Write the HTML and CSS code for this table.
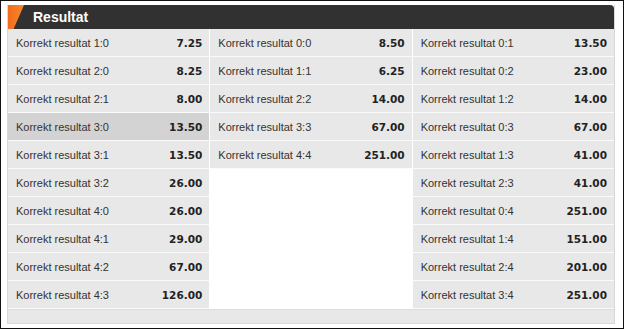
FILE: index.html
```html
<!DOCTYPE html>
<html>
<head>
<meta charset="utf-8">
<link rel="stylesheet" href="styles.css">
</head>
<body>
<div class="frame">
  <div class="panel">
    <div class="header">
      <span class="flag"></span>
      <span class="title">Resultat</span>
    </div>
    <div class="grid">
      <div class="col">
        <div class="cell"><span class="name">Korrekt resultat 1:0</span><span class="odds">7.25</span></div>
        <div class="cell"><span class="name">Korrekt resultat 2:0</span><span class="odds">8.25</span></div>
        <div class="cell"><span class="name">Korrekt resultat 2:1</span><span class="odds">8.00</span></div>
        <div class="cell active"><span class="name">Korrekt resultat 3:0</span><span class="odds">13.50</span></div>
        <div class="cell"><span class="name">Korrekt resultat 3:1</span><span class="odds">13.50</span></div>
        <div class="cell"><span class="name">Korrekt resultat 3:2</span><span class="odds">26.00</span></div>
        <div class="cell"><span class="name">Korrekt resultat 4:0</span><span class="odds">26.00</span></div>
        <div class="cell"><span class="name">Korrekt resultat 4:1</span><span class="odds">29.00</span></div>
        <div class="cell"><span class="name">Korrekt resultat 4:2</span><span class="odds">67.00</span></div>
        <div class="cell"><span class="name">Korrekt resultat 4:3</span><span class="odds">126.00</span></div>
      </div>
      <div class="col">
        <div class="cell"><span class="name">Korrekt resultat 0:0</span><span class="odds">8.50</span></div>
        <div class="cell"><span class="name">Korrekt resultat 1:1</span><span class="odds">6.25</span></div>
        <div class="cell"><span class="name">Korrekt resultat 2:2</span><span class="odds">14.00</span></div>
        <div class="cell"><span class="name">Korrekt resultat 3:3</span><span class="odds">67.00</span></div>
        <div class="cell"><span class="name">Korrekt resultat 4:4</span><span class="odds">251.00</span></div>
        <div class="empty"></div>
      </div>
      <div class="col">
        <div class="cell"><span class="name">Korrekt resultat 0:1</span><span class="odds">13.50</span></div>
        <div class="cell"><span class="name">Korrekt resultat 0:2</span><span class="odds">23.00</span></div>
        <div class="cell"><span class="name">Korrekt resultat 1:2</span><span class="odds">14.00</span></div>
        <div class="cell"><span class="name">Korrekt resultat 0:3</span><span class="odds">67.00</span></div>
        <div class="cell"><span class="name">Korrekt resultat 1:3</span><span class="odds">41.00</span></div>
        <div class="cell"><span class="name">Korrekt resultat 2:3</span><span class="odds">41.00</span></div>
        <div class="cell"><span class="name">Korrekt resultat 0:4</span><span class="odds">251.00</span></div>
        <div class="cell"><span class="name">Korrekt resultat 1:4</span><span class="odds">151.00</span></div>
        <div class="cell"><span class="name">Korrekt resultat 2:4</span><span class="odds">201.00</span></div>
        <div class="cell"><span class="name">Korrekt resultat 3:4</span><span class="odds">251.00</span></div>
      </div>
    </div>
    <div class="footer"></div>
  </div>
</div>
</body>
</html>
```
FILE: styles.css
```css
html, body {
  margin: 0;
  padding: 0;
  background: #fff;
}
.frame {
  width: 624px;
  height: 329px;
  box-sizing: border-box;
  border: 1px solid #111;
  padding: 4px 8px 0 6px;
  font-family: "Liberation Sans", Arial, sans-serif;
}
.panel {
  width: 608px;
  border: 1px solid #d8d8d8;
  border-top: none;
  box-sizing: border-box;
  background: #fff;
}
.header {
  height: 24px;
  background: #313131;
  border-top-right-radius: 4px;
  display: flex;
  align-items: center;
  position: relative;
  overflow: hidden;
}
.flag {
  position: absolute;
  left: 0;
  top: 0;
  width: 16px;
  height: 24px;
  background: linear-gradient(to right, #f26b1d, #f58a2a);
  clip-path: polygon(0 0, 100% 0, 35% 100%, 0 100%);
}
.title {
  margin-left: 25px;
  color: #fff;
  font-weight: bold;
  font-size: 14px;
}
.grid {
  display: flex;
}
.col {
  flex: 1;
  display: flex;
  flex-direction: column;
  border-left: 1px solid #fff;
}
.col:first-child {
  border-left: none;
}
.cell {
  height: 27px;
  border-bottom: 1px solid #fafafa;
  background: #e8e8e8;
  display: flex;
  align-items: center;
  justify-content: space-between;
  padding: 0 7px 0 8px;
  font-size: 11px;
  color: #333;
}
.cell.active {
  background: #d3d3d3;
}
.odds {
  font-family: "DejaVu Sans", Verdana, sans-serif;
  font-weight: bold;
  font-size: 10.5px;
  color: #222;
}
.empty {
  flex: 1;
  background: #fff;
}
.footer {
  height: 13px;
  background: #e8e8e8;
  border-top: 1px solid #dcdcdc;
}
```
